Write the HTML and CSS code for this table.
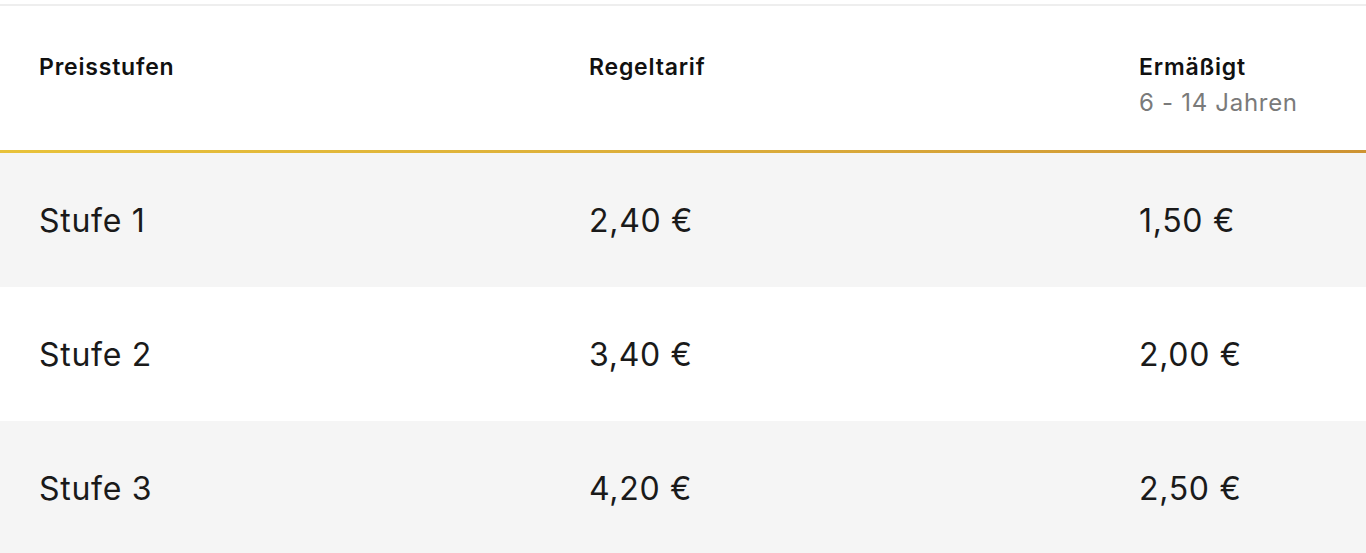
FILE: index.html
```html
<!DOCTYPE html>
<html>
<head>
<link rel="stylesheet" href="styles.css">
</head>
<body>
  <div class="price-table">
    <div class="row head">
      <div class="cell">Preisstufen</div>
      <div class="cell">Regeltarif</div>
      <div class="cell">Ermäßigt<span class="sub">6 - 14 Jahren</span></div>
    </div>
    <div class="row shade">
      <div class="cell">Stufe 1</div>
      <div class="cell">2,40 €</div>
      <div class="cell">1,50 €</div>
    </div>
    <div class="row">
      <div class="cell">Stufe 2</div>
      <div class="cell">3,40 €</div>
      <div class="cell">2,00 €</div>
    </div>
    <div class="row shade">
      <div class="cell">Stufe 3</div>
      <div class="cell">4,20 €</div>
      <div class="cell">2,50 €</div>
    </div>
  </div>
</body>
</html>
```

FILE: styles.css
```css
/* Tariff table */
body {
  margin: 0;
  overflow: hidden;
  background-color: #fff;
  font-family: Inter, "Liberation Sans", sans-serif;
  color: #1a1a1a;
}

.price-table {
  width: 1650px;
  margin-top: 4px;
  border-top: 2px solid #eeeeee;
}

.row {
  display: grid;
  grid-template-columns: repeat(3, 550px);
  height: 134px;
  align-items: center;
  font-size: 32px;
  letter-spacing: 0.7px;
}

.row.head {
  height: 144px;
  align-items: start;
  font-size: 23px;
  font-weight: 600;
  letter-spacing: 0.8px;
  color: #111;
  border-bottom: 3px solid;
  border-image: linear-gradient(to right, #e8c23a, #d9a93a 50%, #c8882e) 1;
}

.head .cell {
  padding-top: 47px;
  line-height: 28px;
}

.cell {
  padding-left: 39px;
}

.sub {
  display: block;
  margin-top: 8px;
  font-size: 24px;
  font-weight: 400;
  letter-spacing: 0.7px;
  color: #7a7a7a;
}

.shade {
  background-color: #f5f5f5;
}
```
